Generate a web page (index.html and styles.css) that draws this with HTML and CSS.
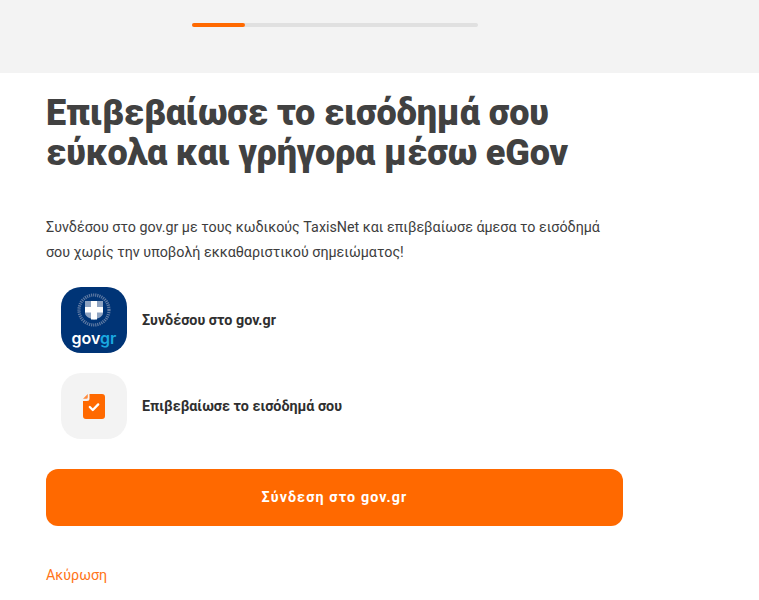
FILE: index.html
```html
<!DOCTYPE html>
<html lang="en">
<head>
    <meta charset="UTF-8">
    <meta name="viewport" content="width=device-width, initial-scale=1.0">
    <title>Επιβεβαίωση εισοδήματος</title>
    <link rel="stylesheet" href="styles.css">
</head>
<body>

<!-- Progress header -->
<div class="topbar">
    <div class="topbar-inner">
        <div class="progress"><div class="progress-fill"></div></div>
    </div>
</div>

<div class="content">
    <h1>Επιβεβαίωσε το εισόδημά σου<br>εύκολα και γρήγορα μέσω eGov</h1>
    <p class="intro">Συνδέσου στο gov.gr με τους κωδικούς TaxisNet και επιβεβαίωσε άμεσα το εισόδημά σου χωρίς την υποβολή εκκαθαριστικού σημειώματος!</p>

    <div class="steps">
        <div class="step">
            <div class="step-icon gov-icon">
                <svg class="emblem" viewBox="0 0 34 34" width="34" height="34">
                    <circle cx="17" cy="17" r="15" fill="none" stroke="#5f7aa2" stroke-width="3.200" stroke-dasharray="1.200 0.900"/>
                    <path d="M8 8h18v12c0 3.500-4.500 5.500-9 6.500-4.500-1-9-3-9-6.500z" fill="#8ea3c1"/>
                    <path d="M14 8h6v6h6v5.500h-6v7h-6v-7H8V14h6z" fill="#fff"/>
                </svg>
                <span class="gov-name">gov<span class="gov-accent">gr</span></span>
            </div>
            <span class="step-label">Συνδέσου στο gov.gr</span>
        </div>
        <div class="step">
            <div class="step-icon doc-icon">
                <svg viewBox="0 0 22 25" width="22" height="25">
                    <path d="M6.500 0H19a3 3 0 0 1 3 3v19a3 3 0 0 1-3 3H3a3 3 0 0 1-3-3V7h4a2.500 2.500 0 0 0 2.500-2.500z" fill="#ff6900"/>
                    <path d="M0 4.800 4.800 0v3.300a1.500 1.500 0 0 1-1.500 1.500z" fill="#ff8a3d"/>
                    <path d="M6.800 13l3 3 5.400-5.600" fill="none" stroke="#fff" stroke-width="2.300" stroke-linecap="round" stroke-linejoin="round"/>
                </svg>
            </div>
            <span class="step-label">Επιβεβαίωσε το εισόδημά σου</span>
        </div>
    </div>

    <button class="main-btn">Σύνδεση στο gov.gr</button>
    <a class="cancel" href="#">Ακύρωση</a>
</div>

</body>
</html>
```

FILE: styles.css
```css
body {
    margin: 0;
    font-family: 'Roboto', 'Liberation Sans', sans-serif;
    background-color: #fff;
    color: #3d3d3d;
}
.topbar {
    height: 73px;
    background-color: #f3f3f3;
    padding-top: 23px;
    box-sizing: border-box;
}
.topbar-inner {
    width: 577px;
    margin-left: 46px;
    display: flex;
    justify-content: center;
}
.progress {
    width: 286px;
    height: 4px;
    background-color: #e0e0e0;
    border-radius: 2px;
}
.progress-fill {
    width: 53px;
    height: 4px;
    background-color: #ff6900;
    border-radius: 2px;
}
.content {
    width: 577px;
    margin-left: 46px;
}
h1 {
    margin: 20px 0 0;
    font-size: 36px;
    line-height: 40px;
    font-weight: 900;
    letter-spacing: -0.15px;
    color: #414141;
    white-space: nowrap;
}
.intro {
    margin: 42px 0 0;
    font-size: 14.3px;
    line-height: 25px;
    color: #3d3d3d;
}
.steps {
    margin: 22px 0 0 15px;
    display: flex;
    flex-direction: column;
    gap: 20px;
}
.step {
    display: flex;
    align-items: center;
    gap: 15px;
}
.step-icon {
    width: 66px;
    height: 66px;
    border-radius: 20px;
    display: flex;
    flex-direction: column;
    align-items: center;
    justify-content: center;
}
.gov-icon {
    background-color: #003476;
    justify-content: flex-start;
    padding-top: 6px;
    box-sizing: border-box;
}
.emblem {
    display: block;
}
.gov-name {
    font-family: 'Inter', 'Liberation Sans', sans-serif;
    font-size: 16px;
    line-height: 16px;
    font-weight: 600;
    color: #fff;
    margin-top: 3px;
}
.gov-accent {
    color: #1aa8e0;
}
.doc-icon {
    background-color: #f3f3f3;
}
.step-label {
    font-size: 14.3px;
    font-weight: 700;
    color: #2f2f2f;
}
.main-btn {
    display: block;
    width: 577px;
    height: 57px;
    margin-top: 30px;
    padding: 0 0 2px;
    border: none;
    border-radius: 12px;
    background-color: #ff6900;
    color: #fff;
    font-family: inherit;
    font-size: 14.3px;
    font-weight: 700;
    letter-spacing: 1.1px;
}
.cancel {
    display: inline-block;
    margin-top: 41px;
    font-size: 14.3px;
    color: #ff7418;
    text-decoration: none;
}
```
